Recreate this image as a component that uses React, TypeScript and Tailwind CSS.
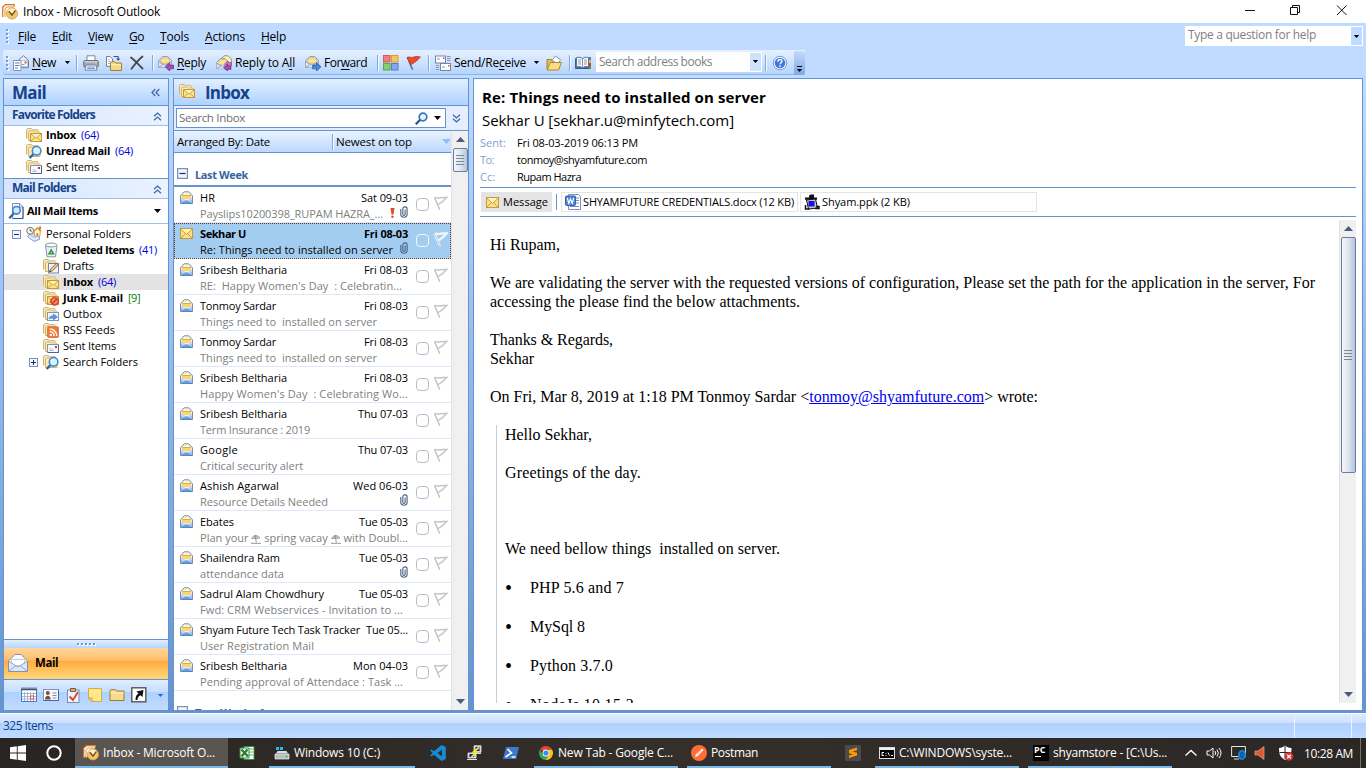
import React, { useLayoutEffect, useRef, useState } from "react";

/** Text that spreads its letters so that the run fills the width of its box. */
function T({ className = "", children }: { className?: string; children: React.ReactNode }) {
  const box = useRef<HTMLSpanElement>(null);
  const run = useRef<HTMLSpanElement>(null);
  const [gap, setGap] = useState(0);
  useLayoutEffect(() => {
    if (!box.current || !run.current) return;
    const n = (run.current.textContent || "").length;
    const natural = run.current.getBoundingClientRect().width - gap * n;
    if (n > 1) setGap((box.current.clientWidth - natural) / n);
  }, []);
  return (
    <span ref={box} className={`block shrink-0 whitespace-pre ${className}`}>
      <span ref={run} className="inline-block" style={{ letterSpacing: `${gap}px` }}>
        {children}
      </span>
    </span>
  );
}

const U = ({ children }: { children: React.ReactNode }) => (
  <span className="underline underline-offset-2">{children}</span>
);

type IconProps = { className?: string };
const Svg = ({ className = "", children, box = "0 0 16 16" }: IconProps & { children: React.ReactNode; box?: string }) => (
  <svg viewBox={box} className={`block h-4 w-4 shrink-0 ${className}`} fill="none">
    {children}
  </svg>
);

const Outlook = ({ className }: IconProps) => (
  <Svg className={className}>
    <path d="M.7 13V3L3.5.7h8.8v2" stroke="#d9762b" strokeWidth="1.2" fill="#fff3dd" />
    <path d="M3 13V5l2-2h7" stroke="#e89a4f" fill="#fff" />
    <circle cx="10" cy="9.5" r="5.6" fill="#f2c76a" stroke="#c9963a" strokeWidth=".7" />
    <path d="M5.5 6.5a6 6 0 0 1 9 0L10 10z" fill="#fff3c6" />
    <path d="M6.8 7.2 10 11l3.5-4.6" stroke="#7c5520" strokeWidth="1.5" />
  </Svg>
);

const FolderBase = () => (
  <>
    <path d="M.5 11.5v-9l1-1h4l1 1.200h5.500v2.800" fill="#f7e7b4" stroke="#cdb577" />
    <path d="M1 11.500V3.500h10.500v8z" fill="#f7e7b4" />
    <path d="M2.500 13.500V5.200l1-1.200h4l1 1.200H14v8.300z" fill="#fbe9ae" stroke="#d0b673" />
    <path d="M3.500 6.200h10" stroke="#fffbe6" />
  </>
);
const SealedIn = () => (
  <>
    <rect x="4.5" y="6.5" width="11" height="8" fill="#ffe384" stroke="#c59a3a" />
    <path d="M5 7h10l-5 4z" fill="#fff4c0" />
    <path d="m5 7 5 4.200L15.200 7M5 14l3.700-3.400M15 14l-3.700-3.400" stroke="#c0943a" fill="none" strokeWidth=".8" />
  </>
);
const SheetIn = () => (
  <>
    <rect x="4.500" y="6.500" width="11" height="8" fill="#f5f9ff" stroke="#8295b3" />
    <path d="M5 14.500h10.500V7" stroke="#50658a" />
    <path d="M6.500 11h3M6.500 12.500h4" stroke="#9db0cd" strokeWidth=".8" /><rect x="12" y="8" width="2" height="2" fill="#c4391f" />
  </>
);
const FolderInbox = ({ className }: IconProps) => <Svg className={className}><FolderBase /><SealedIn /></Svg>;
const FolderSearch = () => (
  <Svg><FolderBase />
    <path d="m7.500 11-3.800 4" stroke="#2b63ac" strokeWidth="2.400" />
    <circle cx="10.600" cy="7.800" r="4.300" fill="#d9f1ff" stroke="#3f8bcf" strokeWidth="1.600" />
    <path d="M8.500 7.200a2.300 2.300 0 0 1 2.300-1.900" stroke="#fff" />
  </Svg>
);
const FolderSent = () => <Svg><FolderBase /><SheetIn /></Svg>;
const FolderDrafts = () => (
  <Svg>
    <FolderBase />
    <rect x="5.500" y="5.500" width="10" height="9.500" fill="#edf4ff" stroke="#6f86aa" />
    <path d="m6.500 14 1-2.800 6-6 1.800 1.700-6 6z" fill="#f7c878" stroke="#6c4b34" strokeWidth=".8" />
    <path d="m6.500 14 .5-1.500 1 1z" fill="#222" />
  </Svg>
);
const FolderJunk = () => (
  <Svg><FolderBase /><SealedIn />
    <circle cx="11.600" cy="11.200" r="4.200" fill="#e8512f" stroke="#c2381e" strokeWidth=".6" />
    <circle cx="11.600" cy="11.200" r="2.600" fill="#f3917b" /><path d="m9.400 13.400 4.400-4.400" stroke="#d63a1c" strokeWidth="1.600" />
  </Svg>
);
const FolderOut = () => (
  <Svg><FolderBase />
    <rect x="4.500" y="6.500" width="11" height="8" fill="#f3f8ff" stroke="#8295b3" />
    <path d="M6 13c0-2.500 2-3.200 4.500-3.200V8l4 3-4 3v-1.800c-2 0-3.500 0-4.500.8z" fill="#5f95e6" stroke="#3468ba" strokeWidth=".5" />
  </Svg>
);
const FolderRss = () => (
  <Svg><FolderBase />
    <rect x="4.500" y="4.800" width="11" height="10.700" rx="1" fill="#ee7a35" stroke="#c25a22" strokeWidth=".6" />
    <path d="M6.700 9.600a4.300 4.300 0 0 1 4.300 4.300M6.700 6.900a7 7 0 0 1 7 7" stroke="#fff" strokeWidth="1.400" /><circle cx="7.800" cy="12.900" r="1.200" fill="#fff" />
  </Svg>
);
const Bin = () => (
  <Svg>
    <path d="m2.500 3.500 1.500 11.300h8.500L14 3.500z" fill="#e9eff5" stroke="#8596a8" />
    <ellipse cx="8.200" cy="3" rx="5.700" ry="1.900" fill="#fff" stroke="#8596a8" />
    <path d="m8.200 8 2.200 3.800H6z" stroke="#2a9a3f" strokeWidth="1.500" />
  </Svg>
);
const Personal = () => (
  <Svg>
    <path d="M1.500 10.500 8 15.500l5.500-2V6L8 4z" fill="#c2d5f2" stroke="#6f8cba" strokeWidth=".7" />
    <path d="m3 10 5 3.500 4-1.500" stroke="#fff" />
    <circle cx="4.200" cy="4.800" r="3.400" fill="#fff" stroke="#6b6b6b" /><path d="M4.200 2.800v2.200h1.900" stroke="#444" strokeWidth=".9" />
    <path d="M8.500 5.200V10h5.600V5.200L11.300 2.300z" fill="#fff8dc" stroke="#b98c55" strokeWidth=".7" />
    <path d="m7.500 5.500 3.800-3.700 3.900 3.700" stroke="#ec9a1c" strokeWidth="1.500" /><path d="M14 .5v3" stroke="#b0392a" strokeWidth="1.400" /><path d="M10.400 7h1.900v3h-1.900z" fill="#d9852c" />
  </Svg>
);
const PageSearch = () => (
  <Svg>
    <path d="M4.500.5h7l3.500 3v12H4.500z" fill="#f8fbff" stroke="#7f93b6" /><path d="M11.500.5v3.500H15" stroke="#7f93b6" /><path d="M15 4v11.500H5" stroke="#3c5480" />
    <path d="m5.800 10.400-4.600 4.800" stroke="#2b5fa3" strokeWidth="2.200" /><circle cx="8.500" cy="7.300" r="3.800" fill="#cdeaff" stroke="#3a86ca" strokeWidth="1.600" />
  </Svg>
);
const LensOnly = () => (
  <Svg className="h-[13px] w-[13px]" box="0 0 13 13">
    <circle cx="8" cy="5" r="3.800" fill="#eef8ff" stroke="#3577bb" strokeWidth="1.700" /><path d="m5.200 7.800-4.400 4.400" stroke="#264f8f" strokeWidth="2.200" />
  </Svg>
);
const OpenMail = () => (
  <Svg box="0 0 13 13" className="h-[13px] w-[13px]">
    <path d="M.5 4.800 4.200.8h4.600l3.700 4v7.400H.5z" fill="#fbf3d2" stroke="#6d82a6" strokeWidth=".9" />
    <path d="M2 4.500h9v4H2z" fill="#ffd664" /><path d="M2 4.500h9" stroke="#c9a04a" strokeWidth=".8" />
    <path d="M1 6.200 4.800 8.500h3.400L12 6.200v5.600H1z" fill="#c3dcfb" />
    <path d="M1 9.500h11v2.300H1z" fill="#6fa2ea" /><path d="m1 11.600 4-3h3l4 3" stroke="#e6f1ff" strokeWidth=".9" /><path d="M.5 12.200h12" stroke="#4470b4" />
  </Svg>
);
const ShutMail = () => (
  <Svg box="0 0 13 13" className="h-[13px] w-[13px]">
    <rect x=".5" y="1.500" width="12" height="10" fill="#ffe182" stroke="#c19a45" /><path d="M1 2h11L6.500 7.500z" fill="#fff3b8" /><path d="m1 2.400 5.500 5 5.500-5M1 11l4.200-4M12 11 7.800 7" stroke="#b7892c" strokeWidth=".8" />
  </Svg>
);
const EnvArt = () => (
  <>
    <path d="m.6 6 4-4.400h5.200l3.600 4v6.800H.6z" fill="#eff5ff" stroke="#7b8eab" strokeWidth=".9" />
    <path d="M2.500 5.500 4.800 2.800h4.600l2.500 2.800v2.700H2.500z" fill="#ffe28c" stroke="#cdac5a" strokeWidth=".7" />
    <path d="m.8 6.800 6.200 3.400 6.200-3.400v5.400H.8z" fill="#dce9fb" /><path d="m.8 6.800 6.200 3.400 6.200-3.400M1 12.200l4.600-3M13 12.200l-4.600-3" stroke="#7b8eab" strokeWidth=".8" />
  </>
);
const ReplyIcon = () => <Svg><EnvArt /><path d="m7.200 11.800 4.500-4v2.300h3.800v3.700h-3.800V16z" fill="#a050b0" stroke="#6c2380" strokeWidth=".7" /></Svg>;
const ReplyAllIcon = () => (
  <Svg><path d="M5 4 8 .8h4L15.400 4v7" fill="#fff0b8" stroke="#8b8b7a" strokeWidth=".9" /><g transform="translate(0 2) scale(.94)"><EnvArt /></g>
    <path d="m8.500 9 3.500-3v1.600h3.500v2.700H12v1.500z" fill="#d077cf" stroke="#80348f" strokeWidth=".6" /><path d="m7.500 12.700 4-3.500V11H15v3.400h-3.500V16z" fill="#a050b0" stroke="#6c2380" strokeWidth=".6" /></Svg>
);
const ForwardIcon = () => <Svg><EnvArt /><path d="m16 11.800-4.500-4v2.300H7.700v3.700h3.800V16z" fill="#4d86e0" stroke="#1c4a9c" strokeWidth=".7" /></Svg>;
const NewMail = () => (
  <Svg>
    <path d="m5 5.500 5.500-4.800 5 4.500v7.500H5z" fill="#e6eefa" stroke="#6f81a0" /><path d="M6.500 5.500h8v6h-8z" fill="#fff" stroke="#a5b3ca" strokeWidth=".7" /><rect x="11.500" y="6.500" width="2" height="2" fill="#e04a2e" />
    <path d="M.5 5.500h7.500v10H.5z" fill="#fff" stroke="#8494af" /><path d="M2 8h4.500M2 10.500h4.500M2 13h3" stroke="#4b83c9" /><path d="M8.500 9.500h3" stroke="#8d9dba" />
  </Svg>
);
const Printer = () => (
  <Svg><path d="M4 6V.8h8V6" fill="#fff" stroke="#7d899e" /><rect x=".7" y="5.500" width="14.600" height="6.500" rx="1.200" fill="#a3aab6" stroke="#656d7b" />
    <path d="M1.500 6.800h13" stroke="#e1e5eb" /><path d="M3.200 10h9.600l1.200 5.200H2z" fill="#f5f9ff" stroke="#7a869b" /><path d="M4.300 12h7.400M4 13.600h8" stroke="#5f93e6" /><rect x="12" y="8" width="2" height="1.200" fill="#f3c33b" /></Svg>
);
const MoveTo = () => (
  <Svg><path d="M.5 1.500H4L6.500 4v7.300h-6z" fill="#fff" stroke="#6b7d9b" /><path d="M2 4.500h1.500M2 6.500h3M2 8.500h3" stroke="#9fb2cf" /><path d="M7.500 1.500h4.700v3" stroke="#34507e" /><path d="m10 3.500 2.200 2.300 2.200-2.300z" fill="#34507e" />
    <path d="M4.500 8 5.700 6.700h3L9.700 8h5.800v7.500h-11z" fill="#f8d77c" stroke="#a37f3d" /><path d="M5 9.800h10" stroke="#fff6d4" /></Svg>
);
const Cross = () => <Svg><path d="M2 2.500c4 3 7 6.500 11.500 11M13.500 1.500C9 5 6 9 2.500 13.800" stroke="#46464c" strokeWidth="1.800" strokeLinecap="round" /></Svg>;
const Categories = () => (
  <Svg><rect x=".5" y=".5" width="6.500" height="6.500" fill="#ef7f79" stroke="#cf5a55" /><rect x="8.500" y=".5" width="6.500" height="6.500" fill="#fbc25a" stroke="#d79c36" />
    <rect x=".5" y="8.500" width="6.500" height="6.500" fill="#80d070" stroke="#57a84c" /><rect x="8.500" y="8.500" width="6.500" height="6.500" fill="#85a5f2" stroke="#5878cd" /></Svg>
);
const FlagRed = () => <Svg><path d="m1.500 2.500 5 12.300" stroke="#456aa5" strokeWidth="1.500" /><path d="M1 2.500c2-1.500 3.500.6 5.800-.2C8.800 1.600 11 .9 14.500 2.100 12.500 3.500 11.500 6 8.500 7.500L4.800 9.800z" fill="#ee4a30" stroke="#b32e1b" strokeWidth=".7" /></Svg>;
const SendRecv = () => (
  <Svg><rect x=".5" y="1" width="10" height="7" fill="#fff" stroke="#7488aa" /><rect x="5.500" y="8.500" width="10" height="7" fill="#fff" stroke="#7488aa" />
    <path d="M12 1.500h3.500M12 3.500h3.500M12 5.500h3.500M1 10.500h3M1 12.500h3M1 14.500h3M2 4h3M7 12h3" stroke="#8095b8" /><path d="M8 2.500h1.500V4H8zM13 10h1.500v1.500H13z" fill="#e04a2e" /></Svg>
);
const OpenFolder = () => <Svg><path d="M1 14.500V4.500h4.500l1 1.500H13v8z" fill="#e8bd5c" stroke="#a37e38" /><path d="m6 5.500 3.500-4.500 5 3.800L12 9z" fill="#fff" stroke="#8796b0" /><path d="m1.200 15 3-7.500h11.300l-3 7.500z" fill="#fbdc83" stroke="#ab8538" /></Svg>;
const Book = () => (
  <Svg><path d="M.6 3.500h13.800v10H.6z" fill="#4a78b8" stroke="#31558c" /><path d="M1.500 2.500c2.500-.6 4.500 0 6 1.200 1.500-1.200 3.500-1.800 6-1.200v9.200c-2.500-.5-4.500 0-6 1.200-1.500-1.200-3.500-1.700-6-1.200z" fill="#fff" stroke="#5c7197" /><path d="M7.500 3.700V13M3 5h3M3 7h3M3 9h3M9 5h3M9 7h3M9 9h3" stroke="#6a7d9e" strokeWidth=".8" /><path d="M14 2h2v3h-2z" fill="#4f79e8" /><path d="M14 5h2v3h-2z" fill="#e8b530" /><path d="M14 8h2v3h-2z" fill="#cf3d28" /><path d="M14 11h2v3h-2z" fill="#45a038" /></Svg>
);
const HelpIcon = () => (
  <Svg><circle cx="8" cy="8" r="6.700" fill="#fff" stroke="#7398d4" /><circle cx="8" cy="8" r="5.300" fill="#3c78da" /><path d="M6 6.700c0-3 4.200-2.600 4-.4-.1 1.400-1.900 1.500-1.900 3" stroke="#fff" strokeWidth="1.400" /><circle cx="8.100" cy="11.100" r=".9" fill="#fff" /></Svg>
);
const Clip = ({ className = "" }: IconProps) => (
  <svg viewBox="0 0 8 12" className={`h-3 w-2 shrink-0 ${className}`} fill="none"><path d="M.8 3v5.300c0 4 6.300 4 6.300 0V2.800C7 .2 2.800.2 2.800 2.800v5.400c0 1.500 2.300 1.500 2.300 0V3.500" stroke="#4a5f80" strokeWidth="1.100" /></svg>
);
const Beach = () => (
  <svg viewBox="0 0 10 10" className="inline-block h-[10px] w-[10px]" fill="none" stroke="#8c8c8c" strokeWidth=".9"><path d="M.8 4.500C1.500 1 6.500.5 8.800 4L.8 4.500M4.300 2l1 6.500M0 9.300h10M3 4.300C3 2.500 4 1.700 4.300 1.600c1 .3 2 1.300 2.200 2.500" /></svg>
);
const ListFlag = ({ on }: { on?: boolean }) => (
  <svg viewBox="0 0 15 16" className="ml-1 h-4 w-[15px] shrink-0" fill="none">
    <path d="m1.500 2.500 5.300 12.300M1.500 3c2-1.200 2.800.5 4.400 0 2-.8 4.300-.3 7.800-.6-2 1.400-3.200 3.900-5.500 5.100L4.600 10" stroke={on ? "#eef4fb" : "#c4c4c4"} strokeWidth={on ? 2.400 : 1.500} />
    {on && <path d="m1.500 2.500 5.300 12.300" stroke="#b9c4d2" strokeWidth=".8" />}
  </svg>
);
const Down = ({ className = "" }: IconProps) => <svg viewBox="0 0 7 4" className={`h-1 w-[7px] shrink-0 ${className}`} fill="currentColor"><path d="M0 0h7L3.500 4z" /></svg>;
const Chev = ({ d, className = "" }: { d: string; className?: string }) => <svg viewBox="0 0 9 9" className={`h-[9px] w-[9px] shrink-0 ${className}`} fill="none"><path d={d} stroke="#3d64a5" strokeWidth="1.200" /></svg>;
const up = "M1 4.300 4.500 1 8 4.300M1 8.300 4.500 5 8 8.300";
const Toggle = ({ plus, className = "" }: { plus?: boolean; className?: string }) => (
  <svg viewBox="0 0 9 9" className={`h-[9px] w-[9px] shrink-0 ${className}`} fill="none"><rect x=".5" y=".5" width="8" height="8" fill="#f2f7ff" stroke="#7791b8" /><path d={plus ? "M2 4.500h5M4.500 2v5" : "M2 4.500h5"} stroke="#1d3152" /></svg>
);
const Sep = ({ className = "" }: IconProps) => <div className={`h-4 w-px shrink-0 bg-[#7fa9e2] shadow-[1px_0_0_#f4f9ff] ${className}`} />;
const Grip = ({ className = "" }: IconProps) => (
  <div className={`flex w-[3px] shrink-0 flex-col gap-[2px] ${className}`}>
    {[0, 1, 2, 3].map((i) => <i key={i} className="block h-[2px] w-[2px] bg-[#6f9dd9] shadow-[1px_1px_0_#fff]" />)}
  </div>
);

function MenuBar() {
  return (
    <div className="flex h-[27px] shrink-0 items-start bg-[#bfdbff]">
      <Grip className="mt-[6px] ml-[6px]" />
      <div className="flex h-[27px] items-center pl-[9px]">
        <T className="w-[18px]"><U>F</U>ile</T>
        <T className="ml-4 w-5"><U>E</U>dit</T>
        <T className="ml-4 w-[25px]"><U>V</U>iew</T>
        <T className="ml-4 w-[15px]"><U>G</U>o</T>
        <T className="ml-4 w-[29px]"><U>T</U>ools</T>
        <T className="ml-4 w-10"><U>A</U>ctions</T>
        <T className="ml-4 w-[25px]"><U>H</U>elp</T>
      </div>
      <div className="mt-[3px] mr-[3px] ml-auto flex h-5 w-[178px] items-center bg-white p-px text-[#808080]">
        <T className="ml-[2px] w-[128px] -translate-y-px">Type a question for help</T>
        <div className="ml-auto flex h-full w-[11px] items-center justify-center bg-[#bfdbff]"><Down className="h-[3px] w-[5px] text-black" /></div>
      </div>
    </div>
  );
}

function Toolbar() {
  return (
    <div className="flex h-[28px] shrink-0 items-start bg-[#bfdbff] pl-[3px]">
      <div className="flex h-[25px] w-[802px] items-center rounded-l-[3px] border-b border-[#8fb3e3] bg-gradient-to-b from-[#e6f1ff] to-[#b5d4fc] pt-px">
        <Grip className="ml-[3px]" />
        <div className="ml-1"><NewMail /></div><T className="ml-[3px] w-6"><U>N</U>ew</T><Down className="ml-2 h-[3px]" />
        <Sep className="ml-[5px]" />
        <div className="ml-[6px]"><Printer /></div><div className="ml-[7px]"><MoveTo /></div><div className="ml-[7px]"><Cross /></div>
        <Sep className="ml-[7px]" />
        <div className="ml-[5px]"><ReplyIcon /></div><T className="ml-[3px] w-[29px]"><U>R</U>eply</T>
        <div className="ml-[10px]"><ReplyAllIcon /></div><T className="ml-[3px] w-[60px]">Reply to A<U>l</U>l</T>
        <div className="ml-[10px]"><ForwardIcon /></div><T className="ml-[3px] w-[43px]">For<U>w</U>ard</T>
        <Sep className="ml-[10px]" />
        <div className="ml-[5px]"><Categories /></div><div className="ml-[7px]"><FlagRed /></div>
        <Sep className="ml-[6px]" />
        <div className="ml-[6px]"><SendRecv /></div><T className="ml-[3px] w-[72px]">Send/Re<U>c</U>eive</T><Down className="ml-[7px] h-[3px]" />
        <div className="ml-[6px]"><OpenFolder /></div>
        <Sep className="ml-[7px]" />
        <div className="ml-[5px]"><Book /></div>
        <div className="ml-[5px] flex h-5 w-[166px] -translate-y-px shrink-0 items-center bg-white p-px text-[#808080]">
          <T className="ml-[2px] w-[113px]">Search address books</T>
          <div className="ml-auto flex h-full w-[11px] items-center justify-center bg-[#cfe2fb]"><Down className="h-[3px] w-[5px] text-black" /></div>
        </div>
        <Sep className="ml-[3px]" />
        <div className="ml-[6px]"><HelpIcon /></div>
        <div className="ml-[6px] flex h-[24px] w-[11px] shrink-0 flex-col items-center justify-end rounded-r-[3px] bg-gradient-to-b from-[#c3dbfa] to-[#7ea9e2] pb-[3px]">
          <i className="mb-[2px] block h-px w-[5px] bg-black" /><Down className="h-[3px] w-[5px]" />
        </div>
      </div>
    </div>
  );
}

const SectionHead = ({ label, width }: { label: string; width: string }) => (
  <div className="flex h-5 shrink-0 items-center border-b border-[#9abfee] bg-gradient-to-r from-[#d5e6fd] to-[#eaf3ff] pr-[6px] pl-2 font-bold text-[#15428b]">
    <T className={`-translate-y-px ${width}`}>{label}</T><Chev d={up} className="mt-[2px] ml-auto" />
  </div>
);

const favourites = [
  { icon: <FolderInbox />, label: "Inbox", w: "w-[30px] font-bold", n: "(64)" },
  { icon: <FolderSearch />, label: "Unread Mail", w: "w-[64px] font-bold", n: "(64)" },
  { icon: <FolderSent />, label: "Sent Items", w: "w-[53px]", n: "" },
];
const folders = [
  { icon: <Bin />, label: "Deleted Items", w: "w-[71px] font-bold", n: "(41)" },
  { icon: <FolderDrafts />, label: "Drafts", w: "w-[31px]", n: "" },
  { icon: <FolderInbox />, label: "Inbox", w: "w-[30px] font-bold", n: "(64)", sel: true },
  { icon: <FolderJunk />, label: "Junk E-mail", w: "w-[60px] font-bold", n: "[9]" },
  { icon: <FolderOut />, label: "Outbox", w: "w-[39px]", n: "" },
  { icon: <FolderRss />, label: "RSS Feeds", w: "w-[52px]", n: "" },
  { icon: <FolderSent />, label: "Sent Items", w: "w-[53px]", n: "" },
  { icon: <FolderSearch />, label: "Search Folders", w: "w-[75px]", n: "", plus: true },
];
const Count = ({ n }: { n: string }) =>
  n ? <T className={n[0] === "[" ? "ml-[5px] w-[12px] text-[#008000]" : "ml-[5px] w-[18px] text-[#0000e0]"}>{n}</T> : null;

function NavPane() {
  return (
    <div className="flex w-[166px] shrink-0 flex-col border border-b-0 border-[#6593cf] bg-white">
      <div className="flex h-[27px] shrink-0 items-center border-b border-[#6593cf] bg-gradient-to-b from-[#e3efff] to-[#afd2ff] pr-2 pl-2">
        <T className="w-[34px] translate-y-px text-[17px] font-bold text-[#15428b]">Mail</T>
        <Chev d="M4.300 1 1 4.500 4.300 8M8.300 1 5 4.500 8.300 8" className="ml-auto" />
      </div>
      <SectionHead label="Favorite Folders" width="w-[83px]" />
      <div className="flex h-[53px] shrink-0 flex-col border-b border-[#6593cf] pt-px">
        {favourites.map((f) => (
          <div key={f.label} className="flex h-4 items-center pl-[22px] text-[11px]">{f.icon}<T className={`ml-1 ${f.w}`}>{f.label}</T><Count n={f.n} /></div>
        ))}
      </div>
      <SectionHead label="Mail Folders" width="w-[64px]" />
      <div className="flex h-[25px] shrink-0 items-center border-b border-[#9abfee] pr-[7px] pl-1 text-[11px] font-bold">
        <PageSearch /><T className="ml-[3px] w-[71px]">All Mail Items</T><Down className="ml-auto" />
      </div>
      <div className="flex grow flex-col pt-[2px] text-[11px]">
        <div className="flex h-4 items-center pl-2"><Toggle /><div className="ml-[5px]"><Personal /></div><T className="ml-1 w-[85px]">Personal Folders</T></div>
        {folders.map((f) => (
          <div key={f.label} className={`flex h-4 items-center ${f.plus ? "pl-[25px]" : "pl-[39px]"} ${f.sel ? "bg-[#e3e3e3]" : ""}`}>
            {f.plus && <Toggle plus className="mr-[5px]" />}{f.icon}<T className={`ml-1 ${f.w}`}>{f.label}</T><Count n={f.n} />
          </div>
        ))}
      </div>
      <div className="flex h-[9px] shrink-0 items-center justify-center gap-[2px] border-t border-[#6593cf] bg-gradient-to-b from-[#e3efff] to-[#b6d6ff]">
        {[0, 1, 2, 3, 4].map((i) => <i key={i} className="block h-[2px] w-[2px] bg-[#6f9dd9] shadow-[1px_1px_0_#fff]" />)}
      </div>
      <div className="flex h-8 shrink-0 items-center border-b border-[#6593cf] bg-[linear-gradient(#ffd69b_0,#ffbd69_40%,#ffab3f_41%,#fed67a_100%)] pl-[3px] text-[11.500px] font-bold">
        <svg viewBox="0 0 22 20" className="mb-[2px] h-5 w-[22px]" fill="none"><path d="M1.500 8 8 1.500h6L20.500 8v10.500h-19z" fill="#f7faff" stroke="#8191ae" /><path d="M4.500 6.500h13v6h-13z" fill="#fff" stroke="#c4cedd" /><path d="m2 9 9 5 9-5v9H2z" fill="#dce8f7" /><path d="m2 8.500 9 5.500 9-5.500M2 18l7-5.500M20 18l-7-5.500" stroke="#8fa3c4" /></svg>
        <T className="ml-[6px] w-[23px] -translate-y-px">Mail</T>
      </div>
      <div className="flex h-[30px] shrink-0 items-center bg-[linear-gradient(#e0edff_0,#c4dfff_40%,#add1ff_41%,#c2dcff_100%)] pl-[17px]">
        <Svg><path d="M.5 2.500h15v12H.5z" fill="#fff" stroke="#5577b3" /><path d="M.5 2h15" stroke="#333" strokeDasharray="1 1" strokeWidth="3" /><path d="M1 6.500h14M1 9.500h14M1 12h14M3.500 5v9M6.500 5v9M9.500 5v9M12.500 5v9" stroke="#8aa9da" strokeWidth=".8" /><rect x="9.500" y="9" width="3" height="3" fill="#fff" stroke="#e9573f" /></Svg>
        <Svg className="ml-[6px]"><rect x=".5" y="2.500" width="15" height="11" fill="#f6faff" stroke="#8296b6" /><path d="M.5 13.500h15V3" stroke="#50658a" /><circle cx="4.800" cy="6" r="2" fill="#8e4f24" /><path d="M2 12.500c0-5 5.600-5 5.600 0z" fill="#7c4a3c" /><path d="M9.500 6h4M9.500 8.500h4M9.500 11h4" stroke="#6f8fbe" /></Svg>
        <Svg className="ml-[6px]"><rect x="2.500" y="3" width="11.500" height="12.500" fill="#eef4fd" stroke="#7d8cab" /><path d="M5.500 1.500h5v3h-5z" fill="#d8b080" stroke="#7b5735" /><path d="m4.500 9.500 3.500 3.500 5-8" stroke="#e0432a" strokeWidth="1.900" /></Svg>
        <Svg className="ml-[6px]"><path d="M1.500 1.500h13v13H5l-3.500-3.500z" fill="#ffe88a" stroke="#cfae45" /><path d="M1.500 11H5v3.500z" fill="#fff6c9" stroke="#c9a227" /></Svg>
        <Svg className="ml-[6px]"><path d="M1 13.500V3.500L2.200 2.500h4L7.500 4h7.500v9.500z" fill="#fbd98a" stroke="#9c7a35" /><path d="M1.500 6h13" stroke="#fff4c3" /></Svg>
        <Svg className="ml-[6px]"><rect x=".8" y=".8" width="14" height="14" fill="#fff" stroke="#555" strokeWidth="1.400" /><path d="M4.500 13c0-4 1-5.500 3-6.500L5.500 4.500l7-1.500-1 7-2-1.800C7 9.500 6.500 11 6.500 13z" fill="#111" /></Svg>
        <Down className="ml-[10px] h-[3px] w-[5px] text-[#3566ae]" />
      </div>
    </div>
  );
}

type Mail = { from: string; fw: string; date: string; dw: string; subj: React.ReactNode; sw: string; clip?: boolean; urgent?: boolean; sel?: boolean };
const mails: Mail[] = [
  { from: "HR", fw: "w-[15px]", date: "Sat 09-03", dw: "w-[47px]", subj: "Payslips10200398_RUPAM HAZRA_...", sw: "w-[183px]", clip: true, urgent: true },
  { from: "Sekhar U", fw: "w-[46px]", date: "Fri 08-03", dw: "w-[44px]", subj: "Re: Things need to installed on server", sw: "w-[193px]", clip: true, sel: true },
  { from: "Sribesh Beltharia", fw: "w-[87px]", date: "Fri 08-03", dw: "w-[44px]", subj: "RE:  Happy Women's Day  : Celebratin...", sw: "w-[202px]" },
  { from: "Tonmoy Sardar", fw: "w-[76px]", date: "Fri 08-03", dw: "w-[44px]", subj: "Things need to  installed on server", sw: "w-[177px]" },
  { from: "Tonmoy Sardar", fw: "w-[76px]", date: "Fri 08-03", dw: "w-[44px]", subj: "Things need to  installed on server", sw: "w-[177px]" },
  { from: "Sribesh Beltharia", fw: "w-[87px]", date: "Fri 08-03", dw: "w-[44px]", subj: "Happy Women's Day  : Celebrating Wo...", sw: "w-[208px]" },
  { from: "Sribesh Beltharia", fw: "w-[87px]", date: "Thu 07-03", dw: "w-[50px]", subj: "Term Insurance : 2019", sw: "w-[110px]" },
  { from: "Google", fw: "w-[38px]", date: "Thu 07-03", dw: "w-[50px]", subj: "Critical security alert", sw: "w-[103px]" },
  { from: "Ashish Agarwal", fw: "w-[79px]", date: "Wed 06-03", dw: "w-[55px]", subj: "Resource Details Needed", sw: "w-[128px]", clip: true },
  { from: "Ebates", fw: "w-[34px]", date: "Tue 05-03", dw: "w-[49px]", subj: <>Plan your <Beach /> spring vacay <Beach /> with Doubl...</>, sw: "w-[208px]" },
  { from: "Shailendra Ram", fw: "w-[80px]", date: "Tue 05-03", dw: "w-[49px]", subj: "attendance data", sw: "w-[84px]", clip: true },
  { from: "Sadrul Alam Chowdhury", fw: "w-[124px]", date: "Tue 05-03", dw: "w-[49px]", subj: "Fwd: CRM Webservices - Invitation to ...", sw: "w-[203px]" },
  { from: "Shyam Future Tech Task Tracker", fw: "w-[160px]", date: "Tue 05...", dw: "w-[42px]", subj: "User Registration Mail", sw: "w-[114px]" },
  { from: "Sribesh Beltharia", fw: "w-[87px]", date: "Mon 04-03", dw: "w-[55px]", subj: "Pending approval of Attendace : Task ...", sw: "w-[203px]" },
];

function MailRow({ m }: { m: Mail }) {
  return (
    <div className={`flex h-9 shrink-0 border-b pl-[6px] text-[11px] ${m.sel ? "border-[#d9e8fb] bg-[#a3cdf0] outline-1 -outline-offset-1 outline-dotted outline-[#5b3a1e]" : "border-[#dbe9fb]"}`}>
      <div className="mt-[4px] w-[13px] shrink-0">{m.sel ? <ShutMail /> : <OpenMail />}</div>
      <div className="ml-[7px] flex w-[208px] shrink-0 flex-col pt-[3px]">
        <div className={`flex h-4 items-center justify-between ${m.sel ? "font-bold" : ""}`}><T className={m.fw}>{m.from}</T><T className={m.dw}>{m.date}</T></div>
        <div className={`flex h-4 items-center ${m.sel ? "" : "text-[#808080]"}`}>
          <T className={m.sw}>{m.subj}</T>
          <div className="ml-auto flex items-center">
            {m.urgent && <svg viewBox="0 0 5 10" className="mr-[5px] mb-[3px] h-[10px] w-[5px]"><path d="M.5 0h4l-1 6.500h-2z" fill="#e04b2c" /><circle cx="2.500" cy="8.700" r="1.300" fill="#e04b2c" /></svg>}
            {m.clip && <Clip className="-mt-1" />}
          </div>
        </div>
      </div>
      <div className={`mt-[11px] ml-2 h-[13px] w-[13px] shrink-0 rounded-[4px] border ${m.sel ? "border-[#f1f7ff]" : "border-[#b9bec6]"}`} />
      <div className="mt-[8px]"><ListFlag on={m.sel} /></div>
    </div>
  );
}

function ScrollBar({ thumb }: { thumb: string }) {
  return (
    <div className="flex w-[17px] shrink-0 flex-col items-center border-l border-[#e2e2e2] bg-[#f0f0f0]">
      <svg viewBox="0 0 9 5" className="my-[6px] h-[5px] w-[9px] shrink-0"><path d="M0 5h9L4.500 0z" fill="#4a5a83" /></svg>
      <div className={`flex w-[15px] shrink-0 flex-col items-center justify-center gap-[2px] rounded-[2px] border border-[#6a7ba6] bg-gradient-to-r from-[#f4f7fa] via-[#dde5ee] to-[#b4c5da] ${thumb}`}>
        {[0, 1, 2, 3].map((i) => <i key={i} className="block h-px w-2 bg-[#7b8698]" />)}
      </div>
      <svg viewBox="0 0 9 5" className="mt-auto mb-[6px] h-[5px] w-[9px] shrink-0"><path d="M0 0h9L4.500 5z" fill="#4a5a83" /></svg>
    </div>
  );
}

function ListPane() {
  return (
    <div className="ml-1 flex w-[296px] shrink-0 flex-col border border-b-0 border-[#6593cf] bg-white">
      <div className="flex h-[27px] shrink-0 items-center border-b border-[#6593cf] bg-gradient-to-b from-[#e3efff] to-[#afd2ff] pl-[5px]">
        <FolderInbox className="-mt-[2px]" /><T className="ml-[10px] w-[44px] translate-y-px text-[17px] font-bold text-[#15428b]">Inbox</T>
      </div>
      <div className="flex h-[25px] shrink-0 items-center border-b border-[#6593cf] bg-[#e3efff] pl-[2px]">
        <div className="flex h-5 w-[270px] items-center border border-[#6593cf] bg-white pr-1 pl-[2px] text-[11.500px] text-[#6d6d6d]">
          <T className="w-[66px]">Search Inbox</T><div className="ml-auto"><LensOnly /></div><Down className="ml-[6px] text-black" />
        </div>
        <Chev d="M1 .7 4.500 4 8 .7M1 4.700 4.500 8 8 4.700" className="ml-[6px]" />
      </div>
      <div className="flex min-h-0 grow">
        <div className="flex w-[277px] shrink-0 flex-col overflow-hidden">
          <div className="flex h-[22px] shrink-0 items-center border-b border-[#6593cf] bg-gradient-to-b from-[#eaf3ff] to-[#bcd8fd] pl-[3px] text-[11.500px]">
            <T className="w-[93px]">Arranged By: Date</T><Sep className="ml-[62px]" /><T className="ml-[3px] w-[76px]">Newest on top</T><Down className="ml-auto h-[5px] w-[9px] text-[#8dbdf5]" />
          </div>
          <div className="flex h-[34px] shrink-0 items-center border-b-2 border-[#6593cf] pt-3 pl-[3px] font-bold text-[#3764a0]"><Toggle className="mb-1 h-[11px] w-[11px]" /><T className="ml-[7px] w-[53px] text-[11px]">Last Week</T></div>
          {mails.map((m, i) => <MailRow key={i} m={m} />)}
          <div className="flex h-10 shrink-0 items-start pt-[15px] pl-[3px] font-bold text-[#3764a0]"><Toggle className="h-[11px] w-[11px]" /><T className="ml-[7px] w-[84px] text-[11px] leading-[14px]">Two Weeks Ago</T></div>
        </div>
        <ScrollBar thumb="h-6" />
      </div>
    </div>
  );
}

const Meta = ({ k, kw, v, vw }: { k: string; kw: string; v: string; vw: string }) => (
  <div className="flex h-[17px] shrink-0 items-center text-[11px]"><div className="w-[37px] shrink-0 text-[#7b9fd3]"><T className={kw}>{k}</T></div><T className={vw}>{v}</T></div>
);

function ReadingPane() {
  return (
    <div className="ml-[4px] flex w-[890px] shrink-0 flex-col border border-b-0 border-[#6593cf] bg-white pr-[6px] pl-[6px]">
      <div className="flex h-[29px] shrink-0 items-end pl-[2px] text-[15px] leading-[21px] font-bold"><T className="w-[284px]">Re: Things need to installed on server</T></div>
      <div className="flex h-[26px] shrink-0 items-center pb-[2px] pl-[2px] text-[15px] leading-5"><T className="w-[252px]">Sekhar U [sekhar.u@minfytech.com]</T></div>
      <Meta k="Sent:" kw="w-[26px]" v="Fri 08-03-2019 06:13 PM" vw="w-[121px]" />
      <Meta k="To:" kw="w-[14px]" v="tonmoy@shyamfuture.com" vw="w-[130px]" />
      <Meta k="Cc:" kw="w-[15px]" v="Rupam Hazra" vw="w-[64px]" />
      <div className="mt-[2px] flex h-[30px] shrink-0 items-center border-y border-[#6593cf] text-[11px]">
        <div className="ml-px flex h-5 w-[71px] items-center bg-[#e4e4e4] pl-[5px]"><ShutMail /><T className="ml-[4px] w-[45px]">Message</T></div>
        <div className="ml-1 h-4 w-px bg-[#6593cf]" />
        <div className="ml-1 flex h-5 w-[237px] items-center border border-[#e4e4e4] pl-[3px]">
          <Svg><path d="M3.500.5h10l2 2v13h-12z" fill="#fff" stroke="#7391c3" /><path d="M10 4h4M10 6.500h4M10 9h4M5 12.500h9" stroke="#6f92cf" /><rect x=".5" y="2" width="10" height="9.500" rx="1" fill="#5484d3" stroke="#345fa8" /><path d="m2.300 4 1.500 5.300L5.500 5l1.700 4.300L8.800 4" stroke="#fff" strokeWidth="1.200" /></Svg>
          <T className="ml-[2px] w-[211px]">SHYAMFUTURE CREDENTIALS.docx (12 KB)</T>
        </div>
        <div className="ml-[2px] flex h-5 w-[237px] items-center border border-[#e4e4e4] pl-[3px]">
          <Svg><path d="M5 4V1.500L7 .5h3v3zM1 3.500h12v2.300H1z" fill="#111" /><path d="m2.500 6 9-1 2 9-9 1z" fill="#c9c9c9" stroke="#111" /><path d="M4.500 7h6v5.500h-6z" fill="#1010e8" /><path d="M1.500 11v4h4M12 12.500h3v2h-4" stroke="#111" strokeWidth="1.500" /></Svg>
          <T className="ml-[2px] w-[88px]">Shyam.ppk (2 KB)</T>
        </div>
      </div>
      <div className="mt-[3px] mb-[7px] flex min-h-0 grow">
        <div className="flex min-w-0 grow flex-col overflow-hidden pl-[10px] font-['Liberation_Serif',serif] text-[16px] leading-[19px]">
          <T className="mt-[15px] w-[70px]">Hi Rupam,</T>
          <T className="mt-[19px] w-[825px]">We are validating the server with the requested versions of configuration, Please set the path for the application in the server, For</T>
          <T className="w-[310px]">accessing the please find the below attachments.</T>
          <T className="mt-[19px] w-[123px]">Thanks &amp; Regards,</T>
          <T className="w-[44px]">Sekhar</T>
          <T className="mt-[19px] w-[548px]">On Fri, Mar 8, 2019 at 1:18 PM Tonmoy Sardar &lt;<span className="text-[#0000ee] underline">tonmoy@shyamfuture.com</span>&gt; wrote:</T>
          <div className="mt-[19px] ml-[6px] flex shrink-0 flex-col border-l border-[#ccc] pl-2">
            <T className="w-[87px]">Hello Sekhar,</T>
            <T className="mt-[19px] w-[136px]">Greetings of the day.</T>
            <T className="mt-[57px] w-[275px]">We need bellow things  installed on server.</T>
            <ul>
              {[["PHP 5.6 and 7", "w-[94px]"], ["MySql 8", "w-[55px]"], ["Python 3.7.0", "w-[83px]"], ["NodeJs 10.15.2", "w-[104px]"]].map(([t, w]) => (
                <li key={t} className="mt-5 flex items-center"><span className="w-[25px] translate-y-px text-[20px] leading-[19px]">•</span><T className={w}>{t}</T></li>
              ))}
            </ul>
          </div>
        </div>
        <ScrollBar thumb="h-[236px]" />
      </div>
    </div>
  );
}

const Task = ({ icon, label, w, box, active }: { icon: React.ReactNode; label: string; w: string; box: string; active?: boolean }) => (
  <div className={`flex h-[30px] shrink-0 items-center border-b-2 border-[#76b9ed] pt-[2px] ${active ? "bg-[#5a5551] pl-[8px]" : "pl-[5px]"} ${box}`}>{icon}<T className={`ml-1 ${w}`}>{label}</T></div>
);

function Taskbar() {
  return (
    <div className="flex h-[30px] shrink-0 items-center bg-gradient-to-r from-[#292522] via-[#342f2b] to-[#2b2724] text-white">
      <Svg className="ml-[10px]"><path d="M0 2.300 6.800 1.300v6.300H0zM7.700 1.200 16 0v7.600H7.700zM0 8.500h6.800v6.300L0 13.800zM7.700 8.500H16V16l-8.300-1.200z" fill="#fff" /></Svg>
      <Svg className="ml-5"><circle cx="8" cy="8" r="6.700" stroke="#fff" strokeWidth="2" /></Svg>
      <Task active box="ml-[13px] w-[153px]" icon={<Outlook />} label="Inbox - Microsoft O..." w="w-[112px]" />
      <Svg className="ml-[11px]"><path d="M5 1.500h10v13H5z" fill="#fff" stroke="#3a8a3e" /><path d="M10 4h4M10 7h4M10 10h4" stroke="#68aa69" /><path d="M1 3h9v10H1z" fill="#e8f5e5" stroke="#3a8a3e" /><path d="m2.500 4.500 6.500 7M8.500 4.500l-6 7" stroke="#26803a" strokeWidth="2.200" /></Svg>
      <Task box="ml-[14px] w-[146px]" icon={<Svg><path d="M2 2h3v3H2zM6 2h3v3H6z" fill="#20b8eb" /><path d="M2 8.500 3.500 6h9L14 8.500z" fill="#ddd" /><path d="M1 9h14v5H1z" fill="#b9bdc1" stroke="#eee" strokeWidth=".7" /><circle cx="12.500" cy="11.500" r="1" fill="#36bc42" /></Svg>} label="Windows 10 (C:)" w="w-[86px]" />
      <Svg className="ml-[15px]"><path d="m11.500 0 4.300 2v12l-4.300 2L4 9.700 1.700 11.500 0 10.500 2.800 8 0 5.500 1.700 4.500 4 6.300zM12 4.500 7.500 8l4.500 3.500z" fill="#168bd8" fillRule="evenodd" /></Svg>
      <Svg className="ml-[21px]"><path d="M7 .8h7v6.500H7zM1 8h8v5H1z" fill="#c9c9c9" stroke="#eee" strokeWidth=".8" /><path d="M8.500 2h4v4h-4zM2.500 9h4.500v3H2.500z" fill="#1717a8" /><path d="M6 8.500h8M0 14.500h10" stroke="#ddd" /><path d="m12 2.500-5.500 4.500h3L4.500 12" stroke="#ffeb16" strokeWidth="1.700" /></Svg>
      <Svg className="ml-[20px]"><path d="M3 2h13l-2.800 12H0z" fill="#3c78cd" /><path d="m4.500 4 4 4-6 4M8.500 12h4" stroke="#fff" strokeWidth="1.600" /></Svg>
      <Task box="ml-[15px] w-[144px]" icon={<Svg className="-ml-px"><path d="M8 8 1.900 4.500A7 7 0 0 1 14 4.500H8z" fill="#e84335" /><path d="M1.900 4.500A7 7 0 0 0 7.500 15L11 9.500 5 9.800z" fill="#35a852" /><path d="M14 4.500A7 7 0 0 1 7.500 15L11 9.500l-.5-5z" fill="#fbc116" /><circle cx="8" cy="8" r="3.500" fill="#fff" /><circle cx="8" cy="8" r="2.600" fill="#4285f4" /></Svg>} label="New Tab - Google C..." w="w-[115px]" />
      <Task box="ml-[9px] w-[144px]" icon={<Svg className="-ml-px"><circle cx="8" cy="8" r="8" fill="#ff6c37" /><path d="m4 12.300 1-3L11 3.500l1.500 1.500-5.800 6z" fill="#fff" /><path d="m6 9.500 4.500-4.300" stroke="#ff6c37" strokeWidth=".7" /></Svg>} label="Postman" w="w-[47px]" />
      <Svg className="ml-[14px]"><rect x="0" y="0" width="16" height="16" rx="1" fill="#4b4b4b" /><path d="m12 2.500-8 2.500v3.200l8 2.300V7.800L7.500 6.500 12 5.200zM12 8 4 10.500V13l8-2.500z" fill="#ff9800" /></Svg>
      <Task box="ml-[14px] w-[144px]" icon={<Svg className="-ml-px"><rect x=".5" y="2.500" width="15" height="11" fill="#050505" stroke="#ddd" /><path d="M1 4h14" stroke="#eee" strokeWidth="2" /><path d="M5 7.500H3v3h2M7 8v.8M7 10v.8M9 7.500l1.500 3M12 10.500h2" stroke="#fff" /></Svg>} label={"C:\\WINDOWS\\syste..."} w="w-[113px]" />
      <Task box="ml-[9px] w-[144px]" icon={<div className="flex h-4 w-4 shrink-0 flex-col bg-black pl-px text-[9px] leading-[10px] font-bold">PC<i className="mt-px ml-px block h-px w-[6px] bg-white" /></div>} label="shyamstore - [C:\Us..." w="w-[114px]" />
      <Svg className="ml-[11px]"><path d="m2.500 10.500 5.500-5 5.500 5" stroke="#fff" strokeWidth="1.300" /></Svg>
      <Svg className="ml-[7px]"><path d="M1 6h2.500L7 3v10l-3.500-3H1z" stroke="#fff" /><path d="M9 6q1.500 2 0 4M11 4.500q2.700 3.500 0 7M13 3q4 5 0 10" stroke="#fff" /></Svg>
      <Svg className="ml-[9px]"><path d="M.6 1.500h13.800v10H.6z" stroke="#e4e4e4" /><path d="M3 14h5" stroke="#ddd" /><ellipse cx="11" cy="10" rx="4" ry="5" fill="#1683d8" /><ellipse cx="11" cy="10" rx="1.200" ry="3" stroke="#0b3f74" /></Svg>
      <Svg className="ml-[7px]"><path d="M1 6h3l6-4.500v13L4 10H1z" fill="#d65b3b" stroke="#f3a184" strokeWidth=".7" /></Svg>
      <Svg className="ml-[8px]"><path d="M1 3c3 0 4-1 6-2.500C9 2 10 3 13.500 3c0 6-1 9-6.500 12C2 12 1 9 1 3z" fill="#fff" /><path d="M7 1v13M1.500 7.500h11" stroke="#2b2724" /><circle cx="11" cy="11.500" r="4.300" fill="#df3030" /><path d="m9.200 9.700 3.600 3.600M12.800 9.700l-3.600 3.600" stroke="#fff" strokeWidth="1.300" /></Svg>
      <T className="ml-[10px] w-[49px] translate-y-px">10:28 AM</T>
      <div className="ml-[7px] h-full w-px bg-[#77726e]" />
    </div>
  );
}

export default function App() {
  return (
    <div className="flex h-[768px] w-[1366px] flex-col overflow-hidden bg-white font-['Open_Sans','Noto_Sans',sans-serif] text-[12px] leading-[16px] text-black">
      <div className="flex h-[23px] shrink-0 items-center pl-[2px]">
        <Outlook /><T className="ml-[5px] w-[137px]">Inbox - Microsoft Outlook</T>
        <svg viewBox="0 0 103 12" className="mr-[18px] mb-[3px] ml-auto h-3 w-[103px]" fill="none" stroke="#111">
          <path d="M0 6.500h10M45.500 3.500h7v7h-7zM47.500 3V1.500h7v7H53M92 1.500l9.500 9.500M101.500 1.500 92 11" />
        </svg>
      </div>
      <MenuBar />
      <Toolbar />
      <div className="flex h-[632px] shrink-0 bg-gradient-to-b from-[#bfdbff] to-[#6593cf] pl-[3px]">
        <NavPane />
        <ListPane />
        <ReadingPane />
      </div>
      <div className="h-[4px] shrink-0 border-b border-white bg-[#6593cf]" />
      <div className="flex h-6 shrink-0 items-center bg-[linear-gradient(#dfecff_0,#cbe0ff_38%,#afd1ff_39%,#bfdbff_100%)] pl-[3px] text-[#15428b]">
        <T className="w-[50px]">325 Items</T>
        <div className="ml-auto h-full w-px bg-[#eaf3ff]" /><div className="mr-[14px] ml-[56px] h-full w-px bg-[#eaf3ff]" />
      </div>
      <Taskbar />
    </div>
  );
}
